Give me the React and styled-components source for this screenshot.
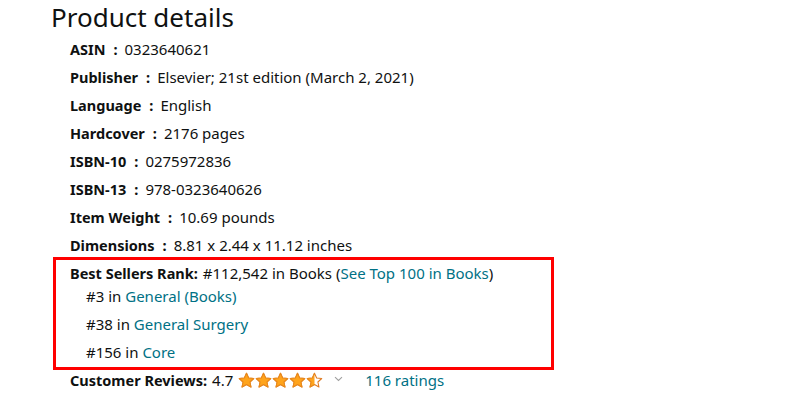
import React from 'react';
import styled, { createGlobalStyle } from 'styled-components';

const GlobalStyle = createGlobalStyle`
  body {
    margin: 0;
    background: #fff;
    font-family: "Noto Sans", "Open Sans", Arial, sans-serif;
    color: #0f1111;
  }
`;

const Page = styled.div`
  width: 800px;
  height: 400px;
  box-sizing: border-box;
  padding: 0 0 0 51px;
  overflow: hidden;
`;

const Heading = styled.h2`
  margin: 0;
  font-size: 26px;
  font-weight: 400;
  line-height: 35px;
`;

const List = styled.ul`
  list-style: none;
  margin: 0;
  padding: 0 0 0 19px;
  font-size: 15px;
`;

const Item = styled.li`
  height: 28px;
  line-height: 28px;
  white-space: nowrap;
`;

const Label = styled.span`
  font-weight: 700;
  font-size: 14.5px;
  margin-right: ${(p) => p.gap || '0'};
`;

const Colon = styled.span`
  font-weight: 700;
  font-size: 14.5px;
  margin: 0 7px 0 8px;
`;

const RankBox = styled.div`
  margin: -2px 0 0 -17px;
  width: 501px;
  height: 113px;
  box-sizing: border-box;
  border: 3px solid #ff0000;
  padding: 0 0 0 14px;
`;

const RankLine = styled.div`
  height: 22px;
  line-height: 26px;
  white-space: nowrap;
`;

const SubRank = styled.div`
  height: 28px;
  line-height: 28px;
  padding-left: 16px;
  white-space: nowrap;
`;

const Link = styled.a`
  color: #007185;
  text-decoration: none;
`;

const Reviews = styled.div`
  display: flex;
  align-items: center;
  height: 20px;
  white-space: nowrap;
`;

const Stars = styled.span`
  display: inline-flex;
  margin-left: 5px;
  margin-top: 1px;
`;

const Chevron = styled.span`
  display: inline-flex;
  margin: -2px 22px 0 11px;
`;

const STAR = 'M12 1.8l3 6.6 7.2.8-5.4 4.9 1.5 7.1L12 17.6l-6.3 3.6 1.5-7.1-5.4-4.9 7.2-.8z';

const Star = ({ fill, id }) => (
  <svg width="17" height="17" viewBox="0 0 24 24">
    <defs>
      <clipPath id={id}>
        <rect x="0" y="0" width={24 * fill} height="24" />
      </clipPath>
    </defs>
    <path d={STAR} fill="#fff" stroke="#de7921" strokeWidth="1.5" strokeLinejoin="round" />
    <path
      d={STAR}
      fill="#ffa41c"
      stroke="#e8891c"
      strokeWidth="1.5"
      strokeLinejoin="round"
      clipPath={`url(#${id})`}
    />
  </svg>
);

const details = [
  ['ASIN', '0323640621'],
  ['Publisher', 'Elsevier; 21st edition (March 2, 2021)'],
  ['Language', 'English'],
  ['Hardcover', '2176 pages'],
  ['ISBN-10', '0275972836'],
  ['ISBN-13', '978-0323640626'],
  ['Item Weight', '10.69 pounds'],
  ['Dimensions', '8.81 x 2.44 x 11.12 inches'],
];

const subRanks = [
  ['#3', 'General (Books)'],
  ['#38', 'General Surgery'],
  ['#156', 'Core'],
];

export default function App() {
  return (
    <Page>
      <GlobalStyle />
      <Heading>Product details</Heading>
      <List>
        {details.map(([label, value]) => (
          <Item key={label}>
            <Label>{label}</Label>
            <Colon>:</Colon>
            {value}
          </Item>
        ))}
        <li>
          <RankBox>
            <RankLine>
              <Label gap="5px">Best Sellers Rank:</Label>#112,542 in Books (
              <Link href="#">See Top 100 in Books</Link>)
            </RankLine>
            {subRanks.map(([rank, cat]) => (
              <SubRank key={rank}>
                {rank} in <Link href="#">{cat}</Link>
              </SubRank>
            ))}
          </RankBox>
        </li>
        <li>
          <Reviews>
            <Label gap="5px">Customer Reviews:</Label>4.7
            <Stars>
              {[1, 1, 1, 1, 0.5].map((f, i) => (
                <Star key={i} fill={f} id={`star-clip-${i}`} />
              ))}
            </Stars>
            <Chevron>
              <svg width="9" height="6" viewBox="0 0 9 6">
                <path d="M1 1.2l3.5 3.3 3.5-3.3" fill="none" stroke="#a0a0a0" strokeWidth="1.1" />
              </svg>
            </Chevron>
            <Link href="#">116 ratings</Link>
          </Reviews>
        </li>
      </List>
    </Page>
  );
}
